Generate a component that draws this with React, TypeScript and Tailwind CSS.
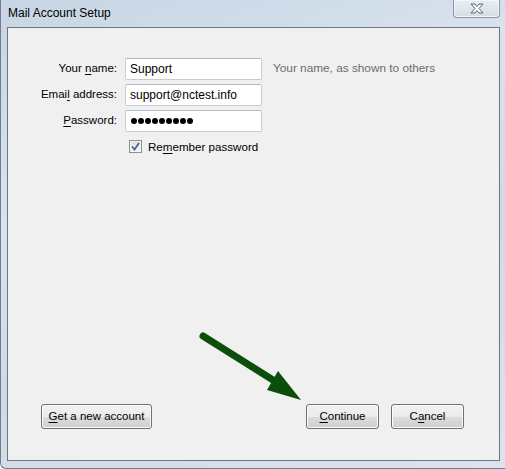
import React from "react";

const F = { fontFamily: '"Liberation Sans", Arial, sans-serif' };

function U({ children }: { children: React.ReactNode }) {
  return <span className="underline underline-offset-[2px]">{children}</span>;
}

function Btn({ w, children }: { w: string; children: React.ReactNode }) {
  return (
    <div
      className={`${w} h-[25px] rounded-[3px] border border-[#707070] bg-[linear-gradient(#f2f2f2_0%,#ebebeb_50%,#dddddd_51%,#cfcfcf_100%)] shadow-[inset_0_0_0_1px_#fcfcfc] flex items-center justify-center text-[11.5px] text-black`}
    >
      {children}
    </div>
  );
}

function Field({ children }: { children?: React.ReactNode }) {
  return (
    <div className="w-[137px] h-[22px] bg-white border border-[#c9cdd2] border-t-[#b5b9be] rounded-[2px] flex items-center pl-[4px] text-[12px] text-black">
      {children}
    </div>
  );
}

export default function App() {
  return (
    <div
      style={F}
      className="relative w-[505px] h-[469px] overflow-hidden bg-[linear-gradient(160deg,#c7d5e4_0%,#d9e3ee_35%,#cfdae6_60%,#dbe4ee_100%)] border-l border-b border-[#6f7d8c] rounded-bl-[6px] flex flex-col"
    >
      {/* Title bar */}
      <div className="h-[27px] flex items-start shrink-0">
        <div className="pl-[7px] pt-[5px] text-[12px] text-black leading-[16px]">Mail Account Setup</div>
        <div className="flex-1" />
        <div className="mr-[5px] w-[47px] h-[18px] rounded-b-[4px] border border-t-0 border-[#8a96a5] bg-[linear-gradient(#e9eef4,#d5dde7)] shadow-[inset_0_0_0_1px_#f4f7fa] flex items-center justify-center">
          <svg width="16" height="11" viewBox="0 0 16 11">
            <path
              d="M2 1 L6 1 L8 3.5 L10 1 L14 1 L10 5.5 L14 10 L10 10 L8 7.5 L6 10 L2 10 L6 5.5 Z"
              fill="#ffffff"
              stroke="#5c6470"
              strokeWidth="1"
              strokeLinejoin="round"
            />
          </svg>
        </div>
      </div>

      {/* Client area */}
      <div className="ml-[6px] mr-[5px] mb-[7px] flex-1 border border-[#6b7785] bg-[#f0f0f0] flex flex-col">
        <div className="pt-[30px] flex flex-col gap-[4px]">
          <div className="flex items-center">
            <div className="w-[109px] text-right text-[11.5px] text-black">
              Your <U>n</U>ame:
            </div>
            <div className="ml-[8px]">
              <Field>Support</Field>
            </div>
            <div className="ml-[11px] text-[11.8px] text-[#6d6d6d]">Your name, as shown to others</div>
          </div>
          <div className="flex items-center">
            <div className="w-[109px] text-right text-[11.5px] text-black">
              Emai<U>l</U> address:
            </div>
            <div className="ml-[8px]">
              <Field>support@nctest.info</Field>
            </div>
          </div>
          <div className="flex items-center">
            <div className="w-[109px] text-right text-[11.5px] text-black">
              <U>P</U>assword:
            </div>
            <div className="ml-[8px]">
              <Field>
                <div className="flex gap-[1px] pl-[1px]">
                  {Array.from({ length: 9 }).map((_, i) => (
                    <span key={i} className="w-[6px] h-[6px] rounded-full bg-black" />
                  ))}
                </div>
              </Field>
            </div>
          </div>
          <div className="flex items-center mt-[2px] pl-[121px]">
            <div className="w-[13px] h-[13px] border border-[#8e8f8f] bg-[linear-gradient(#dcdcdc,#f6f6f6)] shadow-[inset_0_0_0_1px_#f4f4f4] flex items-center justify-center">
              <svg width="9" height="9" viewBox="0 0 9 9">
                <path d="M1 4.5 L3.5 7.5 L8 1" fill="none" stroke="#4a5f97" strokeWidth="1.7" />
              </svg>
            </div>
            <div className="ml-[6px] text-[11.6px] text-black">
              Re<U>m</U>ember password
            </div>
          </div>
        </div>

        <div className="flex-1" />

        <div className="flex items-center pl-[33px] pr-[35px] pb-[31px]">
          <Btn w="w-[111px]">
            <span>
              <U>G</U>et a new account
            </span>
          </Btn>
          <div className="flex-1" />
          <Btn w="w-[73px]">
            <span>
              <U>C</U>ontinue
            </span>
          </Btn>
          <div className="w-[12px]" />
          <Btn w="w-[73px]">
            <span>
              C<U>a</U>ncel
            </span>
          </Btn>
        </div>
      </div>

      {/* Annotation arrow */}
      <svg className="absolute left-0 top-0 pointer-events-none" width="505" height="469">
        <line x1="202" y1="336" x2="272" y2="380" stroke="#0b4d0b" strokeWidth="7" strokeLinecap="round" />
        <polygon points="277,371 300,400 266,390" fill="#0b4d0b" />
      </svg>
    </div>
  );
}
